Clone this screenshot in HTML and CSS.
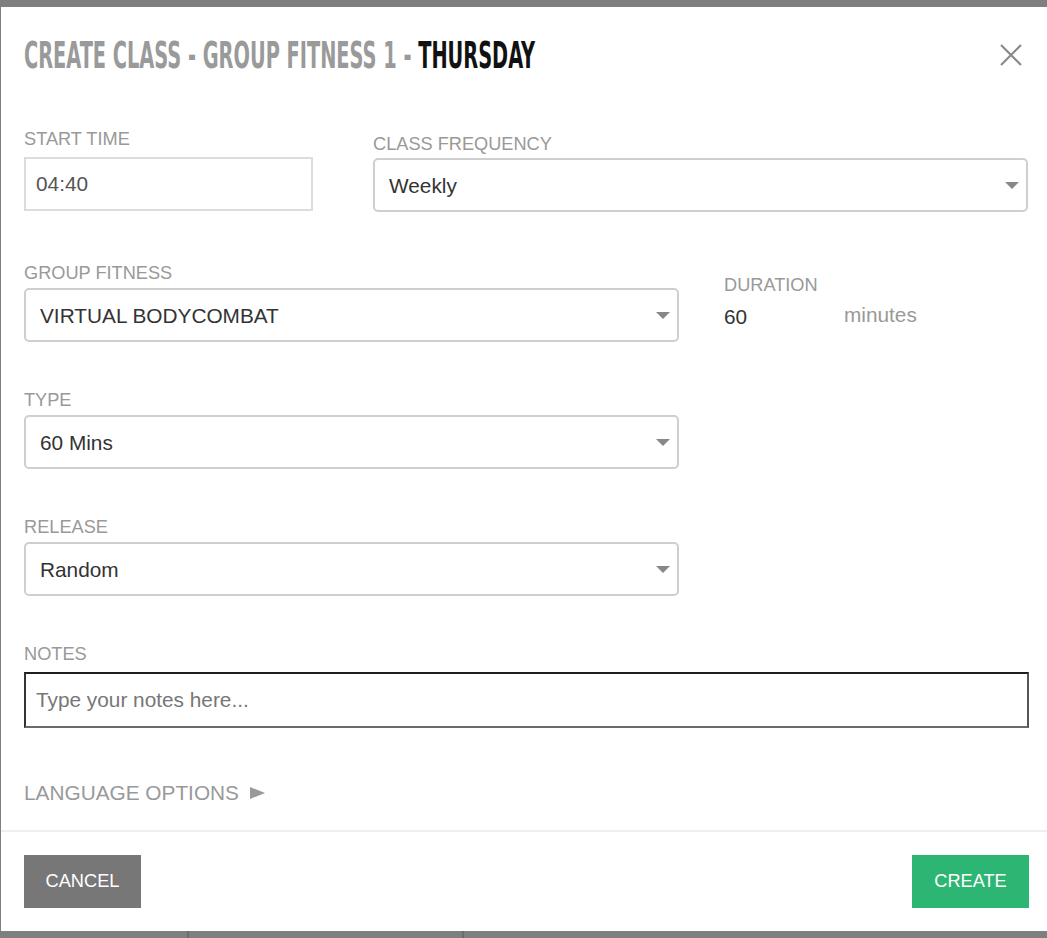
FILE: index.html
```html
<!DOCTYPE html>
<html lang="en">
<head>
<meta charset="utf-8">
<title>Create Class</title>
<link rel="stylesheet" href="styles.css">
</head>
<body>
<div class="backdrop">
  <div class="modal">
    <div class="modal-header">
      <h1 class="title"><span class="title-inner">CREATE CLASS - GROUP FITNESS 1 - <span class="title-day">THURSDAY</span></span></h1>
      <button class="close" type="button" aria-label="Close">
        <svg width="22" height="22" viewBox="0 0 22 22"><path d="M1 1 L21 21 M21 1 L1 21" stroke="#8a8a8a" stroke-width="2.2" fill="none"/></svg>
      </button>
    </div>
    <div class="modal-body">
      <div class="row row-first">
        <div class="field field-start">
          <label class="label">START TIME</label>
          <input class="text-input" type="text" value="04:40">
        </div>
        <div class="field field-freq">
          <label class="label">CLASS FREQUENCY</label>
          <div class="select">
            <select><option>Weekly</option></select>
            <svg class="caret" width="14" height="7" viewBox="0 0 14 7"><polygon points="0,0 14,0 7,7" fill="#888"/></svg>
          </div>
        </div>
      </div>
      <div class="row row-next">
        <div class="field field-wide">
          <label class="label">GROUP FITNESS</label>
          <div class="select">
            <select><option>VIRTUAL BODYCOMBAT</option></select>
            <svg class="caret" width="14" height="7" viewBox="0 0 14 7"><polygon points="0,0 14,0 7,7" fill="#888"/></svg>
          </div>
        </div>
        <div class="field field-duration">
          <label class="label">DURATION</label>
          <div class="duration-line">
            <span class="duration-value">60</span>
            <span class="duration-unit">minutes</span>
          </div>
        </div>
      </div>
      <div class="row row-next">
        <div class="field field-wide">
          <label class="label">TYPE</label>
          <div class="select">
            <select><option>60 Mins</option></select>
            <svg class="caret" width="14" height="7" viewBox="0 0 14 7"><polygon points="0,0 14,0 7,7" fill="#888"/></svg>
          </div>
        </div>
      </div>
      <div class="row row-next">
        <div class="field field-wide">
          <label class="label">RELEASE</label>
          <div class="select">
            <select><option>Random</option></select>
            <svg class="caret" width="14" height="7" viewBox="0 0 14 7"><polygon points="0,0 14,0 7,7" fill="#888"/></svg>
          </div>
        </div>
      </div>
      <div class="row row-next">
        <div class="field field-notes">
          <label class="label label-notes">NOTES</label>
          <input class="notes-input" type="text" placeholder="Type your notes here...">
        </div>
      </div>
      <div class="lang">LANGUAGE OPTIONS <svg class="lang-arrow" width="15" height="12" viewBox="0 0 15 12"><polygon points="0,0 15,6 0,12" fill="#999"/></svg></div>
    </div>
    <div class="modal-footer">
      <button class="btn btn-cancel" type="button">CANCEL</button>
      <button class="btn btn-create" type="button">CREATE</button>
    </div>
  </div>
</div>
</body>
</html>
```
FILE: styles.css
```css
html, body {
  margin: 0;
  padding: 0;
}
body {
  background: #7f7f7f;
  width: 1047px;
  height: 938px;
  overflow: hidden;
  font-family: "Liberation Sans", Arial, sans-serif;
}
.backdrop {
  height: 938px;
  padding-top: 7px;
  padding-left: 1px;
  box-sizing: border-box;
  background-color: #7f7f7f;
  background-image:
    linear-gradient(to right, transparent 187px, #6c6c6c 187px, #6c6c6c 189px, transparent 189px,
      transparent 462px, #6c6c6c 462px, #6c6c6c 464px, transparent 464px);
  background-repeat: no-repeat;
  background-position: left bottom;
  background-size: 100% 7px;
}
.modal {
  width: 1046px;
  height: 924px;
  background: #fff;
  display: flex;
  flex-direction: column;
}
.modal-header {
  height: 95px;
  padding: 0 18px 0 23px;
  display: flex;
  align-items: center;
}
.title {
  margin: 0;
  flex: 1;
  min-width: 0;
  white-space: nowrap;
  font-family: "Liberation Sans Narrow", "DejaVu Sans Condensed", "Liberation Sans", sans-serif;
  font-weight: bold;
  font-size: 38px;
  line-height: 1;
  color: #9a9a9a;
}
.title-inner {
  display: inline-block;
  transform: scaleX(0.566);
  transform-origin: left center;
}
.title-day {
  color: #111;
}
.close {
  border: 0;
  background: transparent;
  padding: 0;
  margin-right: 7px;
  width: 22px;
  height: 22px;
  display: flex;
}
.modal-body {
  padding: 27px 18px 0 23px;
  flex: 1;
}
.row {
  display: flex;
  align-items: flex-start;
}
.row-next {
  margin-top: 51px;
}
.row-next + .row-next {
  margin-top: 48px;
}
.field {
  display: flex;
  flex-direction: column;
}
.label {
  display: block;
  font-size: 18.2px;
  line-height: 20px;
  color: #999;
  margin-bottom: 5px;
}
.field-start {
  width: 289px;
}
.field-start .label {
  margin-bottom: 8px;
}
.field-freq {
  margin-left: 60px;
  width: 655px;
  padding-top: 5px;
}
.field-freq .label {
  margin-bottom: 4px;
}
.field-wide {
  width: 655px;
}
.field-duration {
  margin-left: 45px;
  padding-top: 12px;
}
.field-duration .label {
  margin-bottom: 10px;
}
.duration-line {
  display: flex;
  align-items: center;
  font-size: 20.8px;
  line-height: 24px;
}
.duration-value {
  width: 120px;
  color: #333;
}
.duration-unit {
  color: #999;
  position: relative;
  top: -2px;
}
.text-input {
  box-sizing: border-box;
  width: 289px;
  height: 54px;
  border: 2px solid #dcdcdc;
  border-radius: 0;
  padding: 0 10px;
  font-family: "Liberation Sans", Arial, sans-serif;
  font-size: 20.8px;
  color: #555;
  outline: none;
  margin: 0;
}
.select {
  position: relative;
  height: 54px;
}
.select select {
  -webkit-appearance: none;
  appearance: none;
  box-sizing: border-box;
  width: 100%;
  height: 54px;
  border: 2px solid #cfcfcf;
  border-radius: 5px;
  background: #fff;
  padding: 0 40px 0 14px;
  font-family: "Liberation Sans", Arial, sans-serif;
  font-size: 20.8px;
  color: #333;
  margin: 0;
  outline: none;
}
.caret {
  position: absolute;
  right: 9px;
  top: 24px;
  pointer-events: none;
}
.field-notes {
  width: 1005px;
}
.field-notes .label {
  margin-bottom: 8px;
}
.notes-input {
  box-sizing: border-box;
  width: 1005px;
  height: 56px;
  border-style: solid;
  border-width: 2px;
  border-color: #1e1e1e #555 #6a6a6a #333;
  padding: 0 10px;
  font-family: "Liberation Sans", Arial, sans-serif;
  font-size: 20.8px;
  color: #333;
  outline: none;
  margin: 0;
}
.notes-input::placeholder {
  color: #777;
}
.lang {
  margin-top: 53px;
  font-size: 20.8px;
  line-height: 24px;
  color: #999;
  display: flex;
  align-items: center;
  gap: 10px;
}
.lang-arrow {
  position: relative;
  left: 1px;
}
.modal-footer {
  border-top: 2px solid #efefef;
  padding: 23px 18px 23px 23px;
  display: flex;
  justify-content: space-between;
}
.btn {
  border: 0;
  height: 53px;
  width: 117px;
  font-family: "Liberation Sans", Arial, sans-serif;
  font-size: 18.2px;
  color: #fff;
  padding: 0;
  cursor: pointer;
}
.btn-cancel {
  background: #777;
}
.btn-create {
  background: #2db673;
}
```
